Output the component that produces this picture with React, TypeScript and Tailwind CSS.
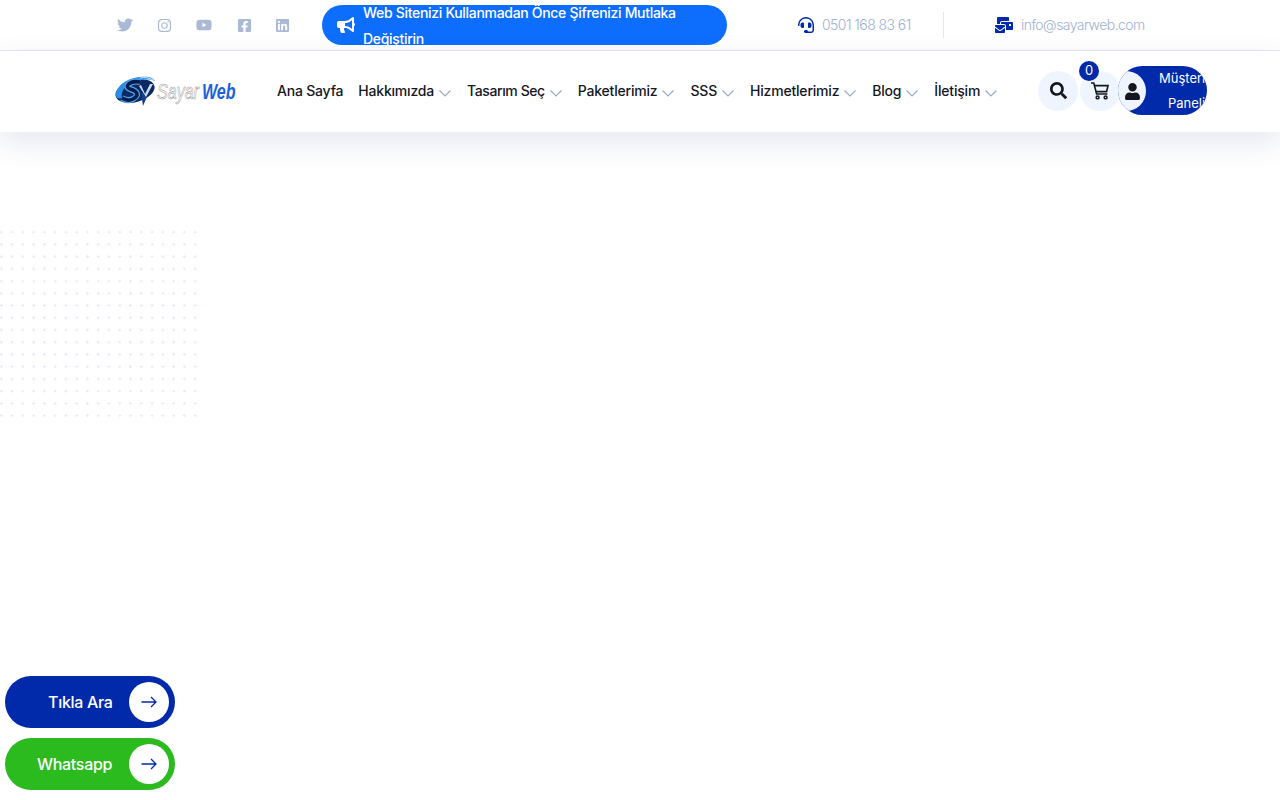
import { FaTwitter, FaInstagram, FaYoutube, FaFacebookSquare, FaLinkedin, FaBullhorn, FaHeadset, FaMailBulk, FaSearch, FaUser } from "react-icons/fa";

const font = "font-['Inter','Noto_Sans',sans-serif]";

const socials = [
  { icon: <FaTwitter size={16} />, w: "w-[16px]" },
  { icon: <FaInstagram size={15} />, w: "w-[15px]" },
  { icon: <FaYoutube size={16} />, w: "w-[16px]" },
  { icon: <FaFacebookSquare size={15} />, w: "w-[15px] ml-[1px]" },
  { icon: <FaLinkedin size={15} />, w: "w-[15px] -ml-[1px]" },
];

const menu = [
  { label: "Ana Sayfa", cls: "mr-[15px]", track: "tracking-[-0.2px]" },
  { label: "Hakkımızda", arrow: true, cls: "mr-[16px]", track: "tracking-[-0.2px]" },
  { label: "Tasarım Seç", arrow: true, cls: "mr-[16px]", track: "tracking-[-0.4px]" },
  { label: "Paketlerimiz", arrow: true, cls: "mr-[16px]", track: "tracking-[-0.2px]" },
  { label: "SSS", arrow: true, cls: "mr-[16px]", track: "tracking-[-0.2px]" },
  { label: "Hizmetlerimiz", arrow: true, cls: "mr-[16px]", track: "tracking-[-0.2px]" },
  { label: "Blog", arrow: true, cls: "mr-[16px]", track: "tracking-[-0.2px]" },
  { label: "İletişim", arrow: true, cls: "mr-[16px]", track: "tracking-[-0.2px]" },
];

function Logo() {
  return (
    <div className="flex items-center w-[120px] h-[32px]">
      <svg width="41" height="32" viewBox="0 0 41 32" fill="none" className="shrink-0">
        <ellipse cx="20" cy="16" rx="20" ry="11" fill="#0b2a63" transform="rotate(-15 20 16)" />
        <path d="M1 20C1 11 12 3 25 2C32 1 38 2 40 6C32 3 20 5 12 11C8 14 6 18 7 23C3 24 1 23 1 20Z" fill="#2b8ee6" />
        <path d="M25 3C30 2 35 3 38 5" stroke="#d5e6f7" strokeWidth="1" />
        <path d="M25 7C14 5 9 12 15 14C22 16 25 20 18 24C14 26 10 25 7 23" stroke="#4aa3f0" strokeWidth="6" />
        <path d="M25 7C14 5 9 12 15 14C22 16 25 20 18 24C14 26 10 25 7 23" stroke="#081c45" strokeWidth="3.6" />
        <path d="M26 18L34 17L28 31Z" fill="#123f8a" />
        <path d="M26 10L30 19L35 9L38 9L31 22L24 11Z" fill="#c9dbf0" />
      </svg>
      <span className="font-['Liberation_Sans',sans-serif] italic text-[22px] leading-none ml-[1px] flex items-baseline origin-left scale-x-[0.73] mt-[3px]">
        <span className="text-white [-webkit-text-stroke:0.6px_#9a9a9a]">Sayar</span>
        <span className="font-bold text-[#1b63dc] ml-[4px]">Web</span>
      </span>
    </div>
  );
}

function Chevron() {
  return (
    <svg width="12" height="7" viewBox="0 0 12 7" fill="none" className="ml-[5px] mt-[5px]">
      <path d="M0.5 0.5L6 6L11.5 0.5" stroke="#9aa8c2" strokeWidth="1.2" />
    </svg>
  );
}

function Arrow() {
  return (
    <svg width="16" height="12" viewBox="0 0 16 12" fill="none">
      <path d="M0.5 6H15M10 1L15 6L10 11" stroke="#012aaa" strokeWidth="1.3" />
    </svg>
  );
}

function Cart() {
  return (
    <svg width="18" height="18" viewBox="0 0 18 18" fill="none" stroke="#14171f" strokeWidth="1.6">
      <path d="M0 1H2.8L5.6 12H16.4" />
      <path d="M3.4 3.6H17L15.6 9.6H4.9" />
      <circle cx="6.6" cy="15.4" r="1.4" />
      <circle cx="14.6" cy="15.4" r="1.4" />
    </svg>
  );
}

function FloatButton({ label, bg, pl }: { label: string; bg: string; pl: string }) {
  return (
    <div className={`flex items-center justify-between w-[170px] h-[52px] rounded-full pr-[6px] ${bg} ${pl}`}>
      <span className="text-white text-[16px] font-medium tracking-[-0.3px]">{label}</span>
      <span className="w-[40px] h-[40px] rounded-full bg-white flex items-center justify-center">
        <Arrow />
      </span>
    </div>
  );
}

export default function App() {
  return (
    <div className={`relative h-[800px] overflow-hidden bg-white ${font}`}>
      {/* top bar */}
      <div className="h-[51px] border-b border-[#e5e7eb] flex items-center pl-[117px]">
        <div className="flex items-center gap-[24px] text-[#a9b9d6] w-[205px]">
          {socials.map((s, i) => (
            <span key={i} className={s.w}>{s.icon}</span>
          ))}
        </div>
        <div className="w-[405px] h-[40px] rounded-[20px] bg-[#0d6efd] flex items-center pl-[15px] overflow-hidden shrink-0">
          <FaBullhorn size={18} className="text-white shrink-0" />
          <p className="text-white text-[14px] font-medium leading-[26px] ml-[8px] mt-[1px] tracking-[-0.31px] w-[340px]">
            Web Sitenizi Kullanmadan Önce Şifrenizi Mutlaka Değiştirin
          </p>
        </div>
        <div className="flex items-center ml-[71px] w-[145px]">
          <FaHeadset size={16} className="text-[#012aaa]" />
          <span className="ml-[8px] -mt-[1px] text-[14px] font-light text-[#9fb1d2] tracking-[-0.55px]">0501 168 83 61</span>
        </div>
        <div className="w-px h-[26px] bg-[#e5e7eb]" />
        <div className="flex items-center ml-[51px]">
          <FaMailBulk size={18} className="text-[#012aaa]" />
          <span className="ml-[8px] -mt-[1px] text-[14px] font-light text-[#9fb1d2] tracking-[-0.55px]">info@sayarweb.com</span>
        </div>
      </div>

      {/* main header */}
      <div className="h-[81px] pb-[2px] bg-white shadow-[0_10px_30px_rgba(40,60,120,0.12)] flex items-center pl-[115px] relative">
        <Logo />
        <nav className="flex items-center ml-[42px] w-[761px] shrink-0">
          {menu.map((m) => (
            <div key={m.label} className={`flex items-center ${m.cls}`}>
              <span className={`text-[14px] font-medium text-[#14171f] whitespace-nowrap ${m.track}`}>{m.label}</span>
              {m.arrow && <Chevron />}
            </div>
          ))}
        </nav>
        <span className="w-[40px] h-[40px] rounded-full bg-[#eff5ff] flex items-center justify-center text-[#14171f]">
          <FaSearch size={17} />
        </span>
        <span className="relative w-[40px] h-[40px] ml-[2px] rounded-full bg-[#eff5ff] flex items-center justify-center">
          <Cart />
          <span className="absolute -top-[10px] left-[-1px] w-[20px] h-[20px] rounded-full bg-[#012aaa] text-white text-[13px] flex items-center justify-center">0</span>
        </span>
        <div className="relative -ml-[2px] w-[89px] h-[49px] rounded-full bg-[#012aaa] overflow-hidden">
          <span className="absolute left-[-12px] top-[5px] w-[40px] h-[40px] rounded-full bg-[#eff5ff] flex items-center justify-center text-[#14171f]">
            <FaUser size={17} className="ml-[13px]" />
          </span>
          <p className="absolute left-[41px] top-0 w-[47px] overflow-hidden text-white text-[13px] leading-[25px] whitespace-nowrap">
            <span className="block">Müşteri</span>
            <span className="block ml-[9px]">Paneli</span>
          </p>
        </div>
      </div>

      {/* dots */}
      <div className="absolute left-[-4px] top-[226px] w-[204px] h-[195px] bg-[radial-gradient(circle,#e6eaff_1px,transparent_1.4px)] bg-[length:10.78px_12.24px]" />

      {/* floating buttons */}
      <div className="absolute left-[5px] top-[676px] flex flex-col gap-[10px]">
        <FloatButton label="Tıkla Ara" bg="bg-[#012aaa]" pl="pl-[43px]" />
        <FloatButton label="Whatsapp" bg="bg-[#2cbb1f]" pl="pl-[32px]" />
      </div>
    </div>
  );
}
